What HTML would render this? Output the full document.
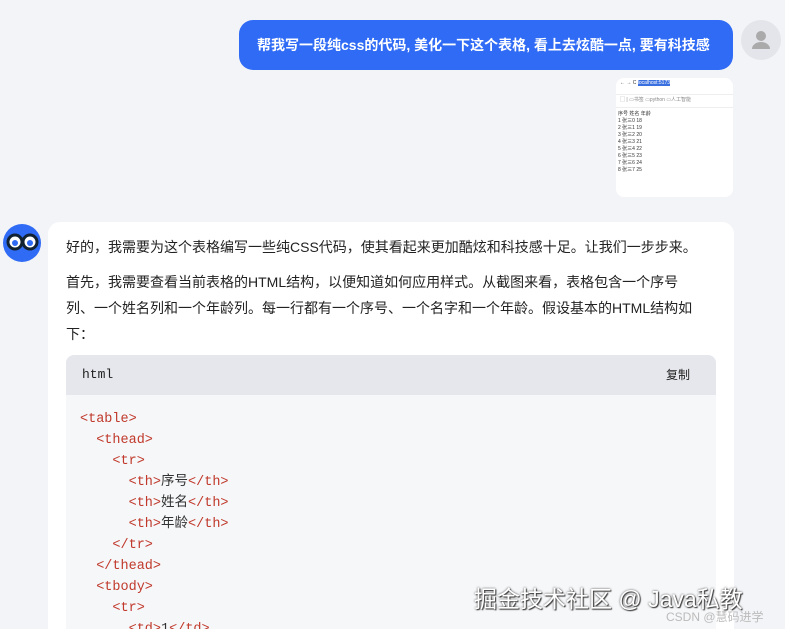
<!DOCTYPE html><html style="overflow:hidden"><head><meta charset="utf-8"><style>
html,body{margin:0;width:785px;height:629px;overflow:hidden}
body{background:#f3f4f8;font-family:"Liberation Sans","Noto Sans CJK SC",sans-serif;position:relative}
.bubble{position:absolute;left:239px;top:20px;width:494px;height:50px;background:#2f6bf5;border-radius:14px;color:#fff;font-size:14px;font-weight:bold;line-height:50px;box-sizing:border-box;padding-left:18px}
.uav{position:absolute;left:741px;top:20px;width:40px;height:40px;border-radius:50%;background:#e4e5ea}
.shot{position:absolute;left:616px;top:78px;width:117px;height:119px;background:#fff;border-radius:8px;font-size:5px;color:#333;overflow:hidden}
.card{position:absolute;left:48px;top:222px;width:686px;height:407px;background:#fff;border-radius:12px 12px 0 0;overflow:hidden}
p{margin:0;position:absolute;left:18px;font-size:14px;color:#222;line-height:26px}
.code{position:absolute;left:18px;top:133px;width:650px;height:300px;background:#f6f7f9;border-radius:8px;overflow:hidden}
.ch{height:40px;background:#e5e7ec;font-family:"Liberation Mono",monospace;font-size:13px;line-height:40px;padding-left:16px;color:#222;position:relative}
.ch span{position:absolute;right:26px;font-family:"Liberation Sans","Noto Sans CJK SC",sans-serif;font-size:12px}
pre{margin:0;padding:14px 14px;font-family:"Liberation Mono","Noto Sans CJK SC",monospace;font-size:13.5px;line-height:21px;color:#333}
.t{color:#c0392b}
</style></head><body>
<div class="bubble">帮我写一段纯css的代码, 美化一下这个表格, 看上去炫酷一点, 要有科技感</div>
<div class="uav"><svg width="40" height="40"><circle cx="20" cy="16" r="5" fill="#aaa"/><path d="M11 29a9 7 0 0118 0z" fill="#aaa"/></svg></div>
<div class="shot"><div style="height:12px;border-bottom:1px solid #eee;padding:2px 4px">← → C <span style="background:#3a6fe0;color:#fff">localhost:5173</span></div><div style="height:10px;border-bottom:1px solid #eee;padding:1px 4px;color:#888">▢ | ▭书签 ▭python ▭人工智能</div>
<div style="padding:3px 2px;line-height:7px">序号 姓名 年龄<br>1 张三0 18<br>2 张三1 19<br>3 张三2 20<br>4 张三3 21<br>5 张三4 22<br>6 张三5 23<br>7 张三6 24<br>8 张三7 25</div></div>
<svg style="position:absolute;left:2px;top:222px" width="40" height="40"><circle cx="20" cy="21" r="19" fill="#2f6bf5"/><circle cx="13" cy="20" r="7" fill="#fff" stroke="#123" stroke-width="3"/><circle cx="28" cy="20" r="7" fill="#fff" stroke="#123" stroke-width="3"/><circle cx="13" cy="21" r="3" fill="#2f6bf5"/><circle cx="28" cy="21" r="3" fill="#2f6bf5"/></svg>
<div class="card">
<p style="top:12px">好的，我需要为这个表格编写一些纯CSS代码，使其看起来更加酷炫和科技感十足。让我们一步步来。</p>
<p style="top:47px;width:640px">首先，我需要查看当前表格的HTML结构，以便知道如何应用样式。从截图来看，表格包含一个序号列、一个姓名列和一个年龄列。每一行都有一个序号、一个名字和一个年龄。假设基本的HTML结构如下：</p>
<div class="code"><div class="ch">html<span>复制</span></div>
<pre><span class="t">&lt;table&gt;</span>
  <span class="t">&lt;thead&gt;</span>
    <span class="t">&lt;tr&gt;</span>
      <span class="t">&lt;th&gt;</span>序号<span class="t">&lt;/th&gt;</span>
      <span class="t">&lt;th&gt;</span>姓名<span class="t">&lt;/th&gt;</span>
      <span class="t">&lt;th&gt;</span>年龄<span class="t">&lt;/th&gt;</span>
    <span class="t">&lt;/tr&gt;</span>
  <span class="t">&lt;/thead&gt;</span>
  <span class="t">&lt;tbody&gt;</span>
    <span class="t">&lt;tr&gt;</span>
      <span class="t">&lt;td&gt;</span>1<span class="t">&lt;/td&gt;</span></pre></div>
</div>
<div style="position:absolute;left:474px;top:580px;font-size:23px;color:#fff;text-shadow:0 0 2px #444,1px 1px 1px #333">掘金技术社区 @ Java私教</div>
<div style="position:absolute;left:666px;top:608px;font-size:12px;color:#bbb">CSDN @慧码进学</div>
</body></html>
